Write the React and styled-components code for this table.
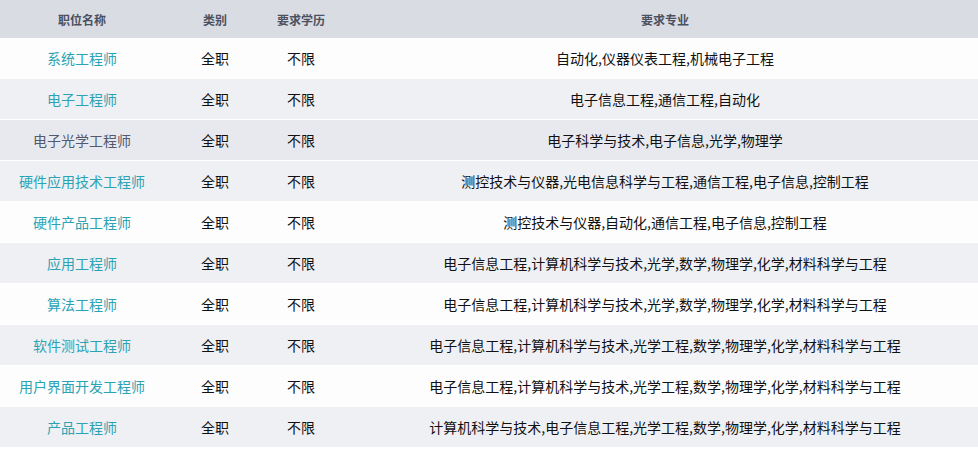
import React from "react";
import styled, { createGlobalStyle } from "styled-components";

const Global = createGlobalStyle`
  html, body { margin: 0; padding: 0; background: #ffffff; overflow: hidden; }
  body { font-family: "Noto Sans CJK SC", "Noto Sans", sans-serif; }
`;

const Table = styled.div`
  width: 978px;
  display: flex;
  flex-direction: column;
`;

const Row = styled.div`
  display: grid;
  grid-template-columns: 164px 102px 70px 1fr;
  height: ${(p) => (p.$head ? "38px" : "40px")};
  border-bottom: ${(p) => (p.$head ? "0" : "1px solid #ffffff")};
  background: ${(p) =>
    p.$head ? "#d9dce3" : p.$hover ? "#e8e9ee" : p.$even ? "#eff0f4" : "#fdfdfd"};
`;

const Cell = styled.div`
  display: flex;
  align-items: center;
  justify-content: center;
  white-space: nowrap;
  padding-left: ${(p) => (p.$wide ? "16px" : "0")};
  font-size: ${(p) => (p.$head ? "12px" : "14px")};
  font-weight: ${(p) => (p.$head ? 700 : 400)};
  color: ${(p) => (p.$head ? "#4b5160" : p.$link ? p.$linkColor : "#111111")};
  cursor: ${(p) => (p.$link ? "pointer" : "default")};
`;

const rows = [
  ["系统工程师", "自动化,仪器仪表工程,机械电子工程"],
  ["电子工程师", "电子信息工程,通信工程,自动化"],
  ["电子光学工程师", "电子科学与技术,电子信息,光学,物理学"],
  ["硬件应用技术工程师", "测控技术与仪器,光电信息科学与工程,通信工程,电子信息,控制工程"],
  ["硬件产品工程师", "测控技术与仪器,自动化,通信工程,电子信息,控制工程"],
  ["应用工程师", "电子信息工程,计算机科学与技术,光学,数学,物理学,化学,材料科学与工程"],
  ["算法工程师", "电子信息工程,计算机科学与技术,光学,数学,物理学,化学,材料科学与工程"],
  ["软件测试工程师", "电子信息工程,计算机科学与技术,光学工程,数学,物理学,化学,材料科学与工程"],
  ["用户界面开发工程师", "电子信息工程,计算机科学与技术,光学工程,数学,物理学,化学,材料科学与工程"],
  ["产品工程师", "计算机科学与技术,电子信息工程,光学工程,数学,物理学,化学,材料科学与工程"],
];

export default function App() {
  return (
    <>
      <Global />
      <Table>
        <Row $head>
          <Cell $head>职位名称</Cell>
          <Cell $head>类别</Cell>
          <Cell $head>要求学历</Cell>
          <Cell $head $wide>要求专业</Cell>
        </Row>
        {rows.map(([title, major], i) => {
          const hover = i === 2;
          return (
            <Row key={title} $even={i % 2 === 1} $hover={hover}>
              <Cell $link $linkColor={hover ? "#515a6e" : "#2ba3b4"}>{title}</Cell>
              <Cell>全职</Cell>
              <Cell>不限</Cell>
              <Cell $wide>{major}</Cell>
            </Row>
          );
        })}
      </Table>
    </>
  );
}
